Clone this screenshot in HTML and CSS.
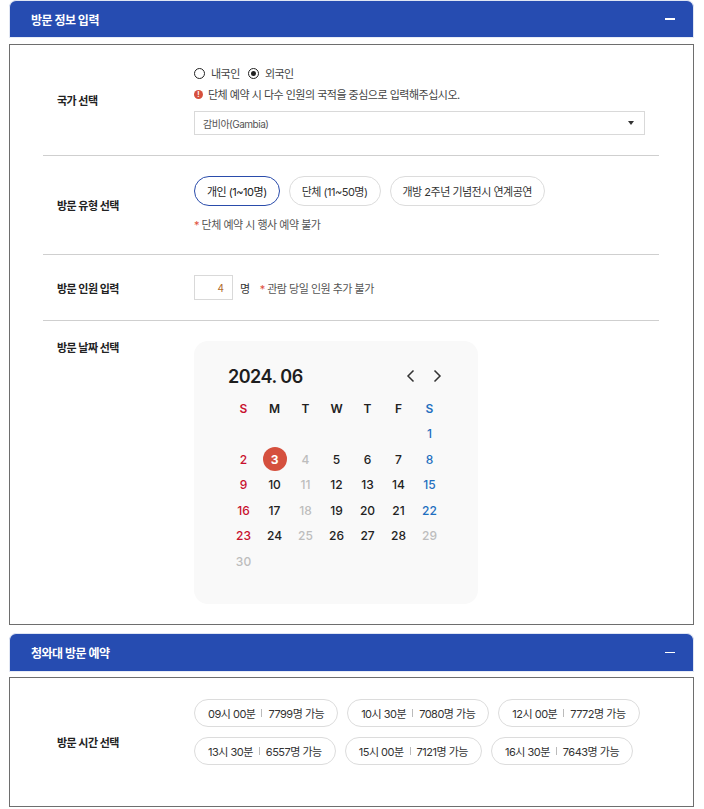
FILE: index.html
```html
<!DOCTYPE html>
<html lang="ko">
<head>
<meta charset="utf-8">
<link rel="stylesheet" href="styles.css">
</head>
<body>
<div class="wrap">
  <div class="sec-head"><span class="sec-title">방문 정보 입력</span><span class="minus"></span></div>
  <div class="sec-box">
    <div class="row">
      <div class="label">국가 선택</div>
      <div class="content">
        <div class="radios">
          <span class="radio"><span class="rdot"></span>내국인</span>
          <span class="radio on"><span class="rdot"></span>외국인</span>
        </div>
        <div class="notice"><span class="nicon">!</span>단체 예약 시 다수 인원의 국적을 중심으로 입력해주십시오.</div>
        <div class="select"><span>감비아(Gambia)</span><span class="caret"></span></div>
      </div>
    </div>
    <div class="row type-row">
      <div class="label">방문 유형 선택</div>
      <div class="content">
        <div class="pills">
          <span class="pill sel">개인 (1~10명)</span>
          <span class="pill">단체 (11~50명)</span>
          <span class="pill">개방 2주년 기념전시 연계공연</span>
        </div>
        <div class="note"><span class="ast">*</span> 단체 예약 시 행사 예약 불가</div>
      </div>
    </div>
    <div class="row">
      <div class="label">방문 인원 입력</div>
      <div class="content inline">
        <span class="num">4</span><span class="unit">명</span>
        <span class="note2"><span class="ast">*</span> 관람 당일 인원 추가 불가</span>
      </div>
    </div>
    <div class="row last top">
      <div class="label">방문 날짜 선택</div>
      <div class="content">
        <div class="cal">
          <div class="cal-head">
            <span class="ym">2024. 06</span>
            <span class="nav">
              <svg width="12" height="14" viewBox="0 0 12 14"><path d="M8.5 1.5 L3 7 L8.5 12.5" fill="none" stroke="#333" stroke-width="1.5"/></svg>
              <svg width="12" height="14" viewBox="0 0 12 14"><path d="M3.5 1.5 L9 7 L3.5 12.5" fill="none" stroke="#333" stroke-width="1.5"/></svg>
            </span>
          </div>
          <div class="grid">
            <span class="wd sun">S</span><span class="wd">M</span><span class="wd">T</span><span class="wd">W</span><span class="wd">T</span><span class="wd">F</span><span class="wd sat">S</span>
            <span></span><span></span><span></span><span></span><span></span><span></span><span class="d sat">1</span>
            <span class="d sun">2</span><span class="d"><span class="picked">3</span></span><span class="d off">4</span><span class="d">5</span><span class="d">6</span><span class="d">7</span><span class="d sat">8</span>
            <span class="d sun">9</span><span class="d">10</span><span class="d off">11</span><span class="d">12</span><span class="d">13</span><span class="d">14</span><span class="d sat">15</span>
            <span class="d sun">16</span><span class="d">17</span><span class="d off">18</span><span class="d">19</span><span class="d">20</span><span class="d">21</span><span class="d sat">22</span>
            <span class="d sun">23</span><span class="d">24</span><span class="d off">25</span><span class="d">26</span><span class="d">27</span><span class="d">28</span><span class="d off">29</span>
            <span class="d off">30</span>
          </div>
        </div>
      </div>
    </div>
  </div>

  <div class="sec-head second"><span class="sec-title">청와대 방문 예약</span><span class="minus"></span></div>
  <div class="sec-box">
    <div class="row last">
      <div class="label">방문 시간 선택</div>
      <div class="content times">
        <span class="pill time">09시 00분<i class="bar"></i>7799명 가능</span>
        <span class="pill time">10시 30분<i class="bar"></i>7080명 가능</span>
        <span class="pill time">12시 00분<i class="bar"></i>7772명 가능</span>
        <span class="pill time">13시 30분<i class="bar"></i>6557명 가능</span>
        <span class="pill time">15시 00분<i class="bar"></i>7121명 가능</span>
        <span class="pill time">16시 30분<i class="bar"></i>7643명 가능</span>
      </div>
    </div>
  </div>
</div>
</body>
</html>
```

FILE: styles.css
```css
* { box-sizing: border-box; }
html, body { margin: 0; padding: 0; background: #fff; }
body {
  font-family: Inter, "Noto Sans CJK KR", sans-serif;
  color: #222;
  font-size: 11px;
  letter-spacing: -0.5px;
}
.wrap { width: 685px; margin-left: 9px; }

.sec-head {
  height: 38px;
  background: #264cb1;
  border-radius: 7px 7px 0 0;
  border: 1px solid #dfe5f3;
  border-bottom-color: #e7ecf6;
  display: flex;
  align-items: center;
  justify-content: space-between;
  padding: 0 18px 0 21px;
}
.sec-head.second { margin-top: 8px; height: 39px; }
.sec-title { color: #fff; font-weight: 700; font-size: 12px; }
.minus { width: 10px; height: 1.5px; background: #fff; }

.sec-box {
  margin-top: 6px;
  border: 1px solid #6e6e6e;
  padding: 0 34px 0 33px;
}
.second + .sec-box { margin-top: 5px; }

.row {
  display: flex;
  align-items: center;
  padding: 20px 0;
  border-bottom: 1px solid #cfcfcf;
}
.row.type-row { padding-bottom: 21px; }
.row.last { border-bottom: none; }
.row.top { align-items: flex-start; }
.label {
  width: 151px;
  padding-left: 14px;
  font-weight: 700;
  font-size: 11px;
  flex-shrink: 0;
}
.row.top .label { padding-top: 0; line-height: 14px; }
.content { flex: 1; }

.radios { display: flex; gap: 8px; height: 16px; align-items: center; }
.radio { display: flex; align-items: center; color: #444; font-size: 11px; }
.rdot {
  width: 11px; height: 11px; border: 1px solid #222; border-radius: 50%;
  margin-right: 6px; position: relative;
}
.radio.on .rdot::after {
  content: ""; position: absolute; left: 2px; top: 2px; width: 5px; height: 5px;
  border-radius: 50%; background: #222;
}
.notice { margin-top: 6px; height: 14px; display: flex; align-items: center; color: #444; font-size: 11px; }
.nicon {
  width: 9px; height: 9px; border-radius: 50%; background: #d6503c; color: #fff;
  font-size: 7px; font-weight: 700; line-height: 9px; text-align: center;
  margin-right: 5px; letter-spacing: 0;
}
.select {
  margin-top: 10px; width: 451px; height: 24px;
  border: 1px solid #d9d9d9;
  display: flex; align-items: center; justify-content: space-between;
  padding: 0 10px 0 8px;
  color: #555; font-size: 10px;
}
.caret {
  width: 0; height: 0;
  border-left: 3px solid transparent; border-right: 3px solid transparent;
  border-top: 4px solid #333;
}

.pills { display: flex; gap: 9px; }
.pill {
  height: 28px; border: 1px solid #dcdcdc; border-radius: 15px;
  display: inline-flex; align-items: center; padding: 0 12px;
  color: #333; font-size: 11px; background: #fff;
}
.pills .pill { height: 30px; }
.pill.sel { border: 1.5px solid #2a4cab; color: #222; }
.note { margin-top: 11px; line-height: 16px; color: #555; font-size: 11px; }
.ast { color: #e0503c; }

.inline { display: flex; align-items: center; }
.num {
  width: 39px; height: 25px; border: 1px solid #d9d9d9;
  display: flex; align-items: center; justify-content: flex-end;
  padding-right: 8px; color: #b06b2a; font-size: 10px; letter-spacing: 0;
}
.unit { margin-left: 7px; color: #333; font-size: 11px; }
.note2 { margin-left: 10px; color: #555; font-size: 11px; }

.cal {
  width: 284px; background: #f9f9f9; border-radius: 14px;
  padding: 23px 34px 30px;
  letter-spacing: 0;
}
.cal-head { height: 24px; display: flex; align-items: center; justify-content: space-between; margin-bottom: 8px; }
.ym { font-weight: 600; font-size: 18px; color: #1e1e1e; letter-spacing: -0.5px; }
.nav { display: flex; gap: 14px; margin-right: 1px; }
.nav svg { display: block; }
.grid {
  display: grid;
  grid-template-columns: repeat(7, 31px);
  grid-template-rows: 25px;
  grid-auto-rows: 25.5px;
}
.grid > span { display: flex; align-items: center; justify-content: center; font-size: 12px; }
.wd { font-weight: 600; color: #222; font-size: 12px; }
.d { color: #222; font-weight: 500; }
.sun { color: #c8102e; }
.sat { color: #1f6fc0; }
.d.off { color: #bdbdbd; }
.picked {
  width: 24px; height: 24px; border-radius: 50%; background: #d5503e; color: #fff;
  display: flex; align-items: center; justify-content: center; font-weight: 700;
}

.times {
  display: flex; flex-wrap: wrap; gap: 10px 9px;
  padding-bottom: 20px;
}
.sec-box:last-child .row { padding: 21px 0; }
.pill.time { padding: 0 13px; }
.bar { display: inline-block; width: 1px; height: 8px; background: #bbb; margin: 0 6px; }
```
